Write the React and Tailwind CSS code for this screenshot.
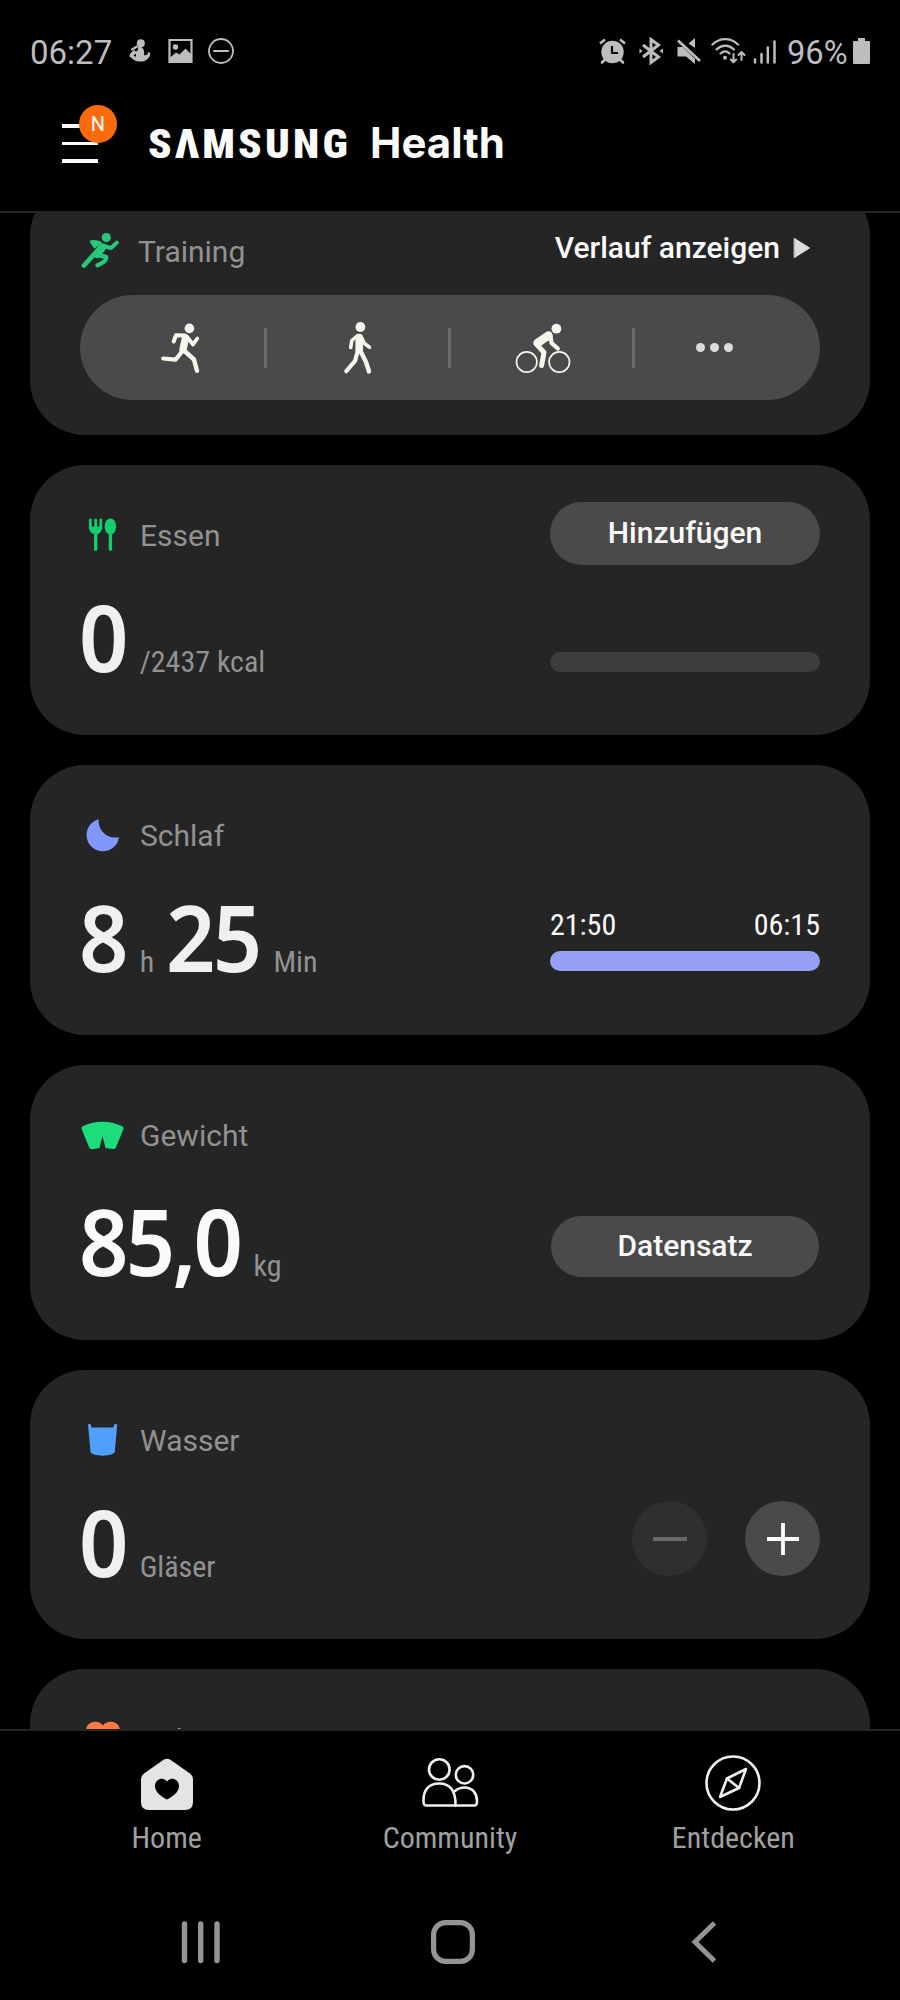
const Svg = ({ w = 48, h = 48, className = '', children }) => (
  <svg
    width={w}
    height={h}
    viewBox={`0 0 ${w} ${h}`}
    fill="none"
    strokeLinecap="round"
    strokeLinejoin="round"
    className={`shrink-0 ${className}`}
  >
    {children}
  </svg>
);

/* Card icons */

const TrainingIcon = () => (
  <Svg className="text-[#26c97a]">
    <circle cx="26.3" cy="9.5" r="4.6" fill="currentColor" />
    <path d="M10.5 13.6c1.5-2 6-.6 10.5.6l-6.4 5.6z" fill="currentColor" stroke="currentColor" strokeWidth="1.5" />
    <path d="M22 18.5L14 26.5L4 37.5" stroke="currentColor" strokeWidth="4.8" />
    <path d="M22 19.5L17 26" stroke="currentColor" strokeWidth="8" />
    <path d="M22 17.5L31 20L36.8 14.6" stroke="currentColor" strokeWidth="4" />
    <path d="M18 27L26 29Q27.5 33 17.6 37.2" stroke="currentColor" strokeWidth="4.4" />
  </Svg>
);

const FoodIcon = () => (
  <Svg className="text-[#15cd6c]">
    <path d="M10.3 7v8.5M15.7 7v8.5M20.8 7v8.5" stroke="currentColor" strokeWidth="2.8" />
    <path d="M9 13.5h13.2c0 4-1.8 6.8-4.8 7.8v15a1.5 1.5 0 0 1-3.4 0v-15c-3.2-1-5-3.8-5-7.8z" fill="currentColor" />
    <ellipse cx="30.4" cy="13.5" rx="5.8" ry="8" fill="currentColor" />
    <path d="M30.4 20v16.3" stroke="currentColor" strokeWidth="3.4" />
  </Svg>
);

const MoonIcon = () => (
  <Svg className="text-[#8197fc]">
    <path d="M18.7 6.2A16.3 16.3 0 1 0 39 24.2C29 26.5 17.5 18.5 18.7 6.2z" fill="currentColor" />
  </Svg>
);

const WeightIcon = () => (
  <Svg className="text-[#1cdc7b]">
    <path
      d="M2 17C1 15 1.8 13.7 3.2 13.1C15 7.3 30 7.3 41.8 13.1C43.4 13.9 44 15.2 43.2 16.8L36 34.3C35.4 35.7 34.7 36 33.4 36L25.5 35L22.5 23L19.5 35L12 36.2C10.7 36.3 9.8 36 9.2 34.6z"
      fill="currentColor"
    />
  </Svg>
);

const WaterIcon = () => (
  <Svg className="text-[#509ffc]">
    <path
      d="M8 7C8 5.7 11 5.7 11 7.3C11 9 11.5 9.6 13 9.6H32C33.5 9.6 34 9 34 7.3C34 5.7 37.2 5.7 37.2 7L34.8 33.5C34.5 39 10.8 39 10.5 33.5z"
      fill="currentColor"
    />
  </Svg>
);

const HeartIcon = () => (
  <Svg className="text-[#fb7a44]">
    <path d="M23 8.5C19 2.5 6 3.5 6 14C6 24 20 33 23 35C26 33 40 24 40 14C40 3.5 27 2.5 23 8.5z" fill="currentColor" />
  </Svg>
);

/* Shortcuts inside the training card */

const RunIcon = () => (
  <Svg w={48} h={56} className="text-[#f4f8ec]">
    <circle cx="33.4" cy="8.4" r="4.8" fill="currentColor" />
    <path d="M29.5 18L27 29.5" stroke="currentColor" strokeWidth="7.4" />
    <path d="M29 15.5L20 15.2L17.7 21.5" stroke="currentColor" strokeWidth="4" />
    <path d="M31.5 17.5L37 24.5L41.3 18.5" stroke="currentColor" strokeWidth="3.8" />
    <path d="M26.5 31L19.5 39.7L7.2 38.5" stroke="currentColor" strokeWidth="4.2" />
    <path d="M28 30.5L38 39.5L41 50.8" stroke="currentColor" strokeWidth="4.4" />
  </Svg>
);

const WalkIcon = () => (
  <Svg w={48} h={56} className="text-[#f4f8ec]">
    <circle cx="26.4" cy="7" r="4.9" fill="currentColor" />
    <path d="M25.2 17.5V30" stroke="currentColor" strokeWidth="7.6" />
    <path d="M23 16L17.8 20.5L16.7 27.5" stroke="currentColor" strokeWidth="3.6" />
    <path d="M27.5 17.5L30.5 23.5L35.5 27.3" stroke="currentColor" strokeWidth="3.6" />
    <path d="M23.8 31L21 41L12.3 51.2" stroke="currentColor" strokeWidth="4.2" />
    <path d="M26.5 31L32 42L35 51.5" stroke="currentColor" strokeWidth="4.4" />
  </Svg>
);

const BikeIcon = () => (
  <Svg w={60} h={56} className="text-[#f4f8ec]">
    <circle cx="13.7" cy="42" r="10.2" stroke="currentColor" strokeWidth="1.7" />
    <circle cx="46.3" cy="42" r="10.2" stroke="currentColor" strokeWidth="1.7" />
    <circle cx="43.4" cy="8.7" r="4.9" fill="currentColor" />
    <path d="M24.5 23L35.5 15.5" stroke="currentColor" strokeWidth="8.4" />
    <path d="M37.5 16L38.5 23L44.8 28.5" stroke="currentColor" strokeWidth="4.2" />
    <path d="M23.5 24L31 32.5L28.6 45.5" stroke="currentColor" strokeWidth="5" />
  </Svg>
);

/* Status bar */

const StatusBar = () => (
  <div className="flex h-20 shrink-0 items-center pt-[22px] pr-[30px] pl-[30px] text-[#bdbdbd]">
    <span className="w-[99px] pt-[3px] text-[33px] leading-none">06:27</span>
    <Svg w={24} h={28}>
      <circle cx="11.8" cy="6.2" r="4" fill="currentColor" />
      <path d="M8 9.5L3 12.5" stroke="currentColor" strokeWidth="2.2" />
      <path d="M9 10C13 9 16 12 15 18C18 19 19 16.5 19.3 15C21.5 15 22 18 19.5 21C16.5 25.5 8 25.5 4.5 22.5L0.5 19.5C0 17 3 14.5 5.5 12.8C6 15 7 15 9 13z" fill="currentColor" />
      <path d="M4.5 18.5L7 16.8V20z" fill="#000" />
    </Svg>
    <Svg w={26} h={28} className="ml-[15px]">
      <path d="M1.5 3h22v22H1.5z" stroke="currentColor" strokeWidth="2.2" strokeLinejoin="miter" />
      <circle cx="7.5" cy="10" r="2.7" fill="currentColor" />
      <path d="M1.5 21L8 15.5L11.5 17.5L17.5 11.5L24 18V25H1.5z" fill="currentColor" />
    </Svg>
    <Svg w={28} h={28} className="ml-[13px]">
      <circle cx="14" cy="14" r="12" stroke="currentColor" strokeWidth="1.8" />
      <path d="M7 14h14" stroke="currentColor" strokeWidth="2" />
    </Svg>

    <Svg w={28} h={28} className="ml-auto">
      <circle cx="13.5" cy="15" r="11.2" fill="currentColor" />
      <path d="M1 6.5L6 2.5M26 6.5L21 2.5" stroke="currentColor" strokeWidth="2.6" strokeLinecap="butt" />
      <path d="M6 22.5L3 25.5M21 22.5L24 25.5" stroke="currentColor" strokeWidth="2.6" />
      <path d="M13 9v7h6" stroke="#000" strokeWidth="2.2" strokeLinecap="butt" />
    </Svg>
    <Svg w={24} h={28} className="ml-[12px]">
      <path d="M4 8L19.5 20L12 25.5V2.5L19.5 8L4 20" stroke="currentColor" strokeWidth="3" strokeLinejoin="miter" strokeLinecap="butt" />
      <path d="M0.5 11.5L3.5 14L0.5 16.5zM24 11.5L20.5 14L24 16.5z" fill="currentColor" />
    </Svg>
    <Svg w={24} h={28} className="ml-[14px]">
      <path d="M0.5 10H6L18 22V27L9 19.5H0.5zM18 1V11L11.5 6.5z" fill="currentColor" />
      <path d="M1 3.5L23 24" stroke="currentColor" strokeWidth="2.8" strokeLinecap="butt" />
    </Svg>
    <Svg w={35} h={28} className="ml-[10px]">
      <path d="M1.5 7.5C9 .3 19.5 .3 27 7.5" stroke="currentColor" strokeWidth="2.4" />
      <path d="M5.5 12.5C11 7.5 17.5 7.5 23 12.5" stroke="currentColor" strokeWidth="2.3" />
      <path d="M9.5 16.5C12.5 14 16 14 18.5 16.5" stroke="currentColor" strokeWidth="2.2" />
      <circle cx="14" cy="20.8" r="2" fill="currentColor" />
      <path d="M22.5 17v8M19.8 22.5L22.5 25.2L25.2 22.5M30.5 23v-8M27.5 18L30.5 15L33.5 18" stroke="currentColor" strokeWidth="2" />
    </Svg>
    <Svg w={24} h={28} className="ml-[7px]">
      <path d="M2 22.5v3M8.5 17v8.5M14.8 10.5v15M21.5 4.5v21" stroke="currentColor" strokeWidth="2.5" />
    </Svg>
    <span className="ml-[10px] w-[66px] pt-[2px] text-[34px] leading-none whitespace-nowrap">
      <span className="inline-block origin-left scale-x-[0.96]">96%</span>
    </span>
    <Svg w={17} h={28}>
      <path d="M5 1h7v3h4a1 1 0 0 1 1 1v21a1 1 0 0 1-1 1H1a1 1 0 0 1-1-1V5a1 1 0 0 1 1-1h4z" fill="currentColor" />
    </Svg>
  </div>
);

const Header = () => (
  <header className="flex h-[133px] shrink-0 items-center border-b-2 border-[#252525] pb-1 pl-[62px] text-[#fbfbfb]">
    <div className="relative flex w-9 flex-col gap-[14px]">
      <span className="h-[3.5px] bg-[#fbfbfb]" />
      <span className="h-[3.5px] bg-[#fbfbfb]" />
      <span className="h-[3.5px] bg-[#fbfbfb]" />
      <span className="absolute -top-[19px] left-[17px] flex size-[38px] items-center justify-center rounded-full bg-[#fb6b0c] text-xl text-white">
        N
      </span>
    </div>
    <h1 className="ml-[50px] flex items-baseline leading-none">
      <span aria-label="SAMSUNG" className="w-[222px] origin-left scale-x-[1.075] text-[40px] font-black tracking-[3px] font-stretch-75%">
        SΛMSUNG
      </span>
      <span className="font-['Inter'] text-[42px] font-bold">Health</span>
    </h1>
  </header>
);

const Card = ({ icon, label, height, value, right }) => (
  <section className={`flex shrink-0 justify-between rounded-[55px] bg-[#252525] px-[50px] ${height}`}>
    <div className="pt-[52px]">
      <div className="flex h-10 items-center gap-3 text-[30px] text-[#929292]">
        {icon}
        <span className="pb-[3px]">{label}</span>
      </div>
      <div className="mt-[34px] -ml-px flex items-baseline">{value}</div>
    </div>
    <div className="w-[270px]">{right}</div>
  </section>
);

const Big = ({ children, className = 'text-[#f0f0f0]' }) => (
  <span className={`origin-left scale-x-[0.94] font-['Noto_Sans'] text-[92px] leading-[92px] font-semibold tracking-[-3px] ${className}`}>
    {children}
  </span>
);

const Unit = ({ children, className = '' }) => (
  <span className={`text-[30px] leading-10 text-[#929292] font-stretch-75% ${className}`}>{children}</span>
);

const PillButton = ({ children, className = '' }) => (
  <button className={`flex w-full items-center justify-center rounded-full bg-[#4a4a4a] pb-[3px] text-[30px] font-medium text-[#fafafa] ${className}`}>
    {children}
  </button>
);

const Divider = () => <span className="h-10 w-[3px] bg-[#6c6c6c]" />;

const TrainingCard = () => (
  <section className="-mt-8 h-[254px] shrink-0 rounded-[55px] bg-[#252525] px-[50px] pt-[51px]">
    <div className="flex h-10 items-center text-[30px]">
      <TrainingIcon />
      <span className="ml-[10px] pb-[2px] text-[#929292]">Training</span>
      <span className="mr-[13px] ml-auto pb-[9px] font-medium text-[#fafafa]">Verlauf anzeigen</span>
      <Svg w={18} h={22} className="mr-[9px] mb-[8px]">
        <path d="M1.5 1.5L16.5 11L1.5 20.5z" fill="#dcdcdc" stroke="#dcdcdc" />
      </Svg>
    </div>
    <div className="mt-[23px] grid h-[105px] grid-cols-[184px_3px_181px_3px_181px_3px_185px] items-center rounded-full bg-[#4a4a4a]">
      <span className="pl-[76px]"><RunIcon /></span>
      <Divider />
      <span className="pl-[67px]"><WalkIcon /></span>
      <Divider />
      <span className="pl-[62px]"><BikeIcon /></span>
      <Divider />
      <span className="flex gap-[5px] pl-[61px]">
        <i className="size-[9px] rounded-full bg-[#dcdcdc]" />
        <i className="size-[9px] rounded-full bg-[#dcdcdc]" />
        <i className="size-[9px] rounded-full bg-[#dcdcdc]" />
      </span>
    </div>
  </section>
);

const NavItem = ({ label, children }) => (
  <a className="flex flex-col items-center">
    <Svg w={60} h={60}>{children}</Svg>
    <span className="mt-[4px] text-[30px] leading-10 text-[#a0a0a0] font-stretch-75%">{label}</span>
  </a>
);

export default function App() {
  return (
    <div className="flex h-[2000px] w-[900px] flex-col overflow-hidden bg-black font-['Roboto',sans-serif]">
      <StatusBar />
      <Header />

      <main className="flex h-[1516px] shrink-0 flex-col gap-[30px] overflow-hidden px-[30px]">
        <TrainingCard />
        <Card
          height="h-[270px]"
          icon={<FoodIcon />}
          label="Essen"
          value={<><Big>0</Big><Unit className="ml-[11px]">/2437 kcal</Unit></>}
          right={
            <div className="pt-[37px]">
              <PillButton className="h-[63px]">Hinzufügen</PillButton>
              <div className="mt-[87px] h-5 rounded-full bg-[#3d3d3d]" />
            </div>
          }
        />
        <Card
          height="h-[270px]"
          icon={<MoonIcon />}
          label="Schlaf"
          value={
            <>
              <Big>8</Big><Unit className="ml-[11px]">h</Unit>
              <Big className="ml-[12px] text-[#f0f0f0]">25</Big><Unit className="ml-[8px]">Min</Unit>
            </>
          }
          right={
            <div className="pt-[139px]">
              <div className="flex h-10 items-center justify-between text-[30px] text-[#fafafa] font-stretch-75%">
                <span>21:50</span>
                <span>06:15</span>
              </div>
              <div className="mt-[7px] h-5 rounded-full bg-[#94a1f4]" />
            </div>
          }
        />
        <Card
          height="h-[275px]"
          icon={<WeightIcon />}
          label="Gewicht"
          value={<><Big className="mt-[4px] text-[#fafafa]">85,0</Big><Unit className="ml-[3px]">kg</Unit></>}
          right={
            <div className="px-px pt-[151px]">
              <PillButton className="h-[61px]">Datensatz</PillButton>
            </div>
          }
        />
        <Card
          height="h-[269px]"
          icon={<WaterIcon />}
          label="Wasser"
          value={<><Big>0</Big><Unit className="ml-[11px]">Gläser</Unit></>}
          right={
            <div className="flex justify-end gap-[38px] pt-[131px]">
              <button className="flex size-[75px] items-center justify-center rounded-full bg-[#2f2f2f]">
                <span className="h-1 w-[34px] bg-[#6a6a6a]" />
              </button>
              <button className="flex size-[75px] items-center justify-center rounded-full bg-[#4a4a4a]">
                <Svg w={34} h={34}>
                  <path d="M1 17h32M17 1v32" stroke="#fff" strokeWidth="3.8" strokeLinecap="butt" />
                </Svg>
              </button>
            </div>
          }
        />
        <Card height="h-[270px]" icon={<HeartIcon />} label="Puls" />
      </main>

      <nav className="grid h-[147px] shrink-0 grid-cols-3 border-t-2 border-[#252525] px-[25px] pt-[23px]">
        <NavItem label="Home">
          <path
            d="M27 5.5Q30 3.8 33 5.5L53 19.5Q56 21.8 56 25V48Q56 56 48 56H12Q4 56 4 48V25Q4 21.8 7 19.5z"
            fill="#e4e4e4"
          />
          <path d="M30 27.5C26 22 18 25 18 32C18 38.5 25 43 30 45.5C35 43 42 38.5 42 32C42 25 34 22 30 27.5z" fill="#000" />
        </NavItem>
        <NavItem label="Community">
          <g stroke="#f0f0f0" strokeWidth="2.6">
            <circle cx="19.3" cy="15.5" r="10.3" />
            <circle cx="44.5" cy="20.8" r="8.7" />
            <path d="M3.5 47C3 36 9 29.5 19.3 29.5S36 36 35.5 51.5H6Q3.5 51.5 3.5 47z" />
            <path d="M35 37Q39 33.5 44.5 33.5C53 33.5 57 40 57 47Q57 51.5 54.5 51.5H35.5" />
          </g>
        </NavItem>
        <NavItem label="Entdecken">
          <g stroke="#f0f0f0" strokeWidth="2.6">
            <circle cx="30" cy="29" r="26.5" />
            <path d="M43 15L36 34L17 43L24 24.5z" />
            <path d="M24 24.5L36 34" />
          </g>
        </NavItem>
      </nav>

      <div className="flex h-[124px] shrink-0 items-center pt-2 text-[#949494]">
        <Svg w={40} h={44} className="ml-[181px]">
          <path d="M3.5 4v36.5M19.7 4v36.5M36 4v36.5" stroke="currentColor" strokeWidth="5.4" />
        </Svg>
        <Svg w={44} h={44} className="ml-[210px]">
          <rect x="2.6" y="2.6" width="38.8" height="38.8" rx="12" stroke="currentColor" strokeWidth="5.2" />
        </Svg>
        <Svg w={28} h={44} className="ml-[216px]">
          <path d="M23.5 3L4 22L23.5 41" stroke="currentColor" strokeWidth="5" strokeLinecap="butt" strokeLinejoin="miter" />
        </Svg>
      </div>
    </div>
  );
}
